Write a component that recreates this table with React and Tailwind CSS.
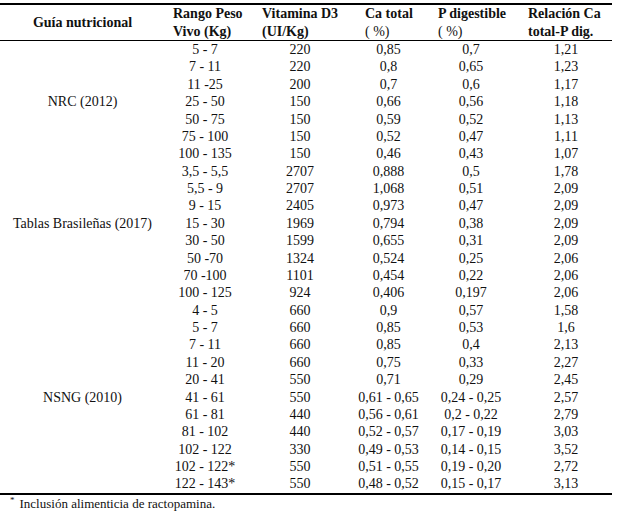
const rows = [
  ["", "5 - 7", "220", "0,85", "0,7", "1,21"],
  ["", "7 - 11", "220", "0,8", "0,65", "1,23"],
  ["", "11 -25", "200", "0,7", "0,6", "1,17"],
  ["NRC (2012)", "25 - 50", "150", "0,66", "0,56", "1,18"],
  ["", "50 - 75", "150", "0,59", "0,52", "1,13"],
  ["", "75 - 100", "150", "0,52", "0,47", "1,11"],
  ["", "100 - 135", "150", "0,46", "0,43", "1,07"],
  ["", "3,5 - 5,5", "2707", "0,888", "0,5", "1,78"],
  ["", "5,5 - 9", "2707", "1,068", "0,51", "2,09"],
  ["", "9 - 15", "2405", "0,973", "0,47", "2,09"],
  ["Tablas Brasileñas (2017)", "15 - 30", "1969", "0,794", "0,38", "2,09"],
  ["", "30 - 50", "1599", "0,655", "0,31", "2,09"],
  ["", "50 -70", "1324", "0,524", "0,25", "2,06"],
  ["", "70 -100", "1101", "0,454", "0,22", "2,06"],
  ["", "100 - 125", "924", "0,406", "0,197", "2,06"],
  ["", "4 - 5", "660", "0,9", "0,57", "1,58"],
  ["", "5 - 7", "660", "0,85", "0,53", "1,6"],
  ["", "7 - 11", "660", "0,85", "0,4", "2,13"],
  ["", "11 - 20", "660", "0,75", "0,33", "2,27"],
  ["", "20 - 41", "550", "0,71", "0,29", "2,45"],
  ["NSNG (2010)", "41 - 61", "550", "0,61 - 0,65", "0,24 - 0,25", "2,57"],
  ["", "61 - 81", "440", "0,56 - 0,61", "0,2 - 0,22", "2,79"],
  ["", "81 - 102", "440", "0,52 - 0,57", "0,17 - 0,19", "3,03"],
  ["", "102 - 122", "330", "0,49 - 0,53", "0,14 - 0,15", "3,52"],
  ["", "102 - 122*", "550", "0,51 - 0,55", "0,19 - 0,20", "2,72"],
  ["", "122 - 143*", "550", "0,48 - 0,52", "0,15 - 0,17", "3,13"],
];

const cols = "grid grid-cols-[165px_80px_110px_67px_98px_92px]";

const App = () => {
  return (
    <div className="w-[617px] h-[514px] bg-white pt-[3px] text-[14px] text-[#111] font-['Liberation_Serif',serif]">
      <div className="w-[612px] border-t-2 border-b-2 border-black">
        {/* header */}
        <div className={`${cols} h-[36px] border-b border-black font-bold leading-[17.5px]`}>
          <div className="flex items-center justify-center">Guía nutricional</div>
          <div className="pl-[8px] whitespace-nowrap">
            Rango Peso
            <br />
            Vivo (Kg)
          </div>
          <div className="pl-[17px] whitespace-nowrap">
            Vitamina D3
            <br />
            (UI/Kg)
          </div>
          <div className="pl-[10px] whitespace-nowrap">
            Ca total
            <br />
            <span className="font-normal">( %)</span>
          </div>
          <div className="pl-[16px] whitespace-nowrap">
            P digestible
            <br />
            <span className="font-normal">( %)</span>
          </div>
          <div className="pl-[8px] whitespace-nowrap">
            Relación Ca
            <br />
            total-P dig.
          </div>
        </div>

        {/* body */}
        <div className="flex flex-col">
          {rows.map((r, i) => (
            <div key={i} className={`${cols} h-[17.38px] leading-[17.38px] text-center whitespace-nowrap`}>
              {r.map((c, j) => (
                <div key={j}>{c}</div>
              ))}
            </div>
          ))}
        </div>
      </div>

      <p className="mt-[1px] pl-[10px] text-[13px] leading-[16px]">
        <sup className="text-[9px]">*</sup>
        <span className="pl-[5px]">Inclusión alimenticia de ractopamina.</span>
      </p>
    </div>
  );
};

export default App;
